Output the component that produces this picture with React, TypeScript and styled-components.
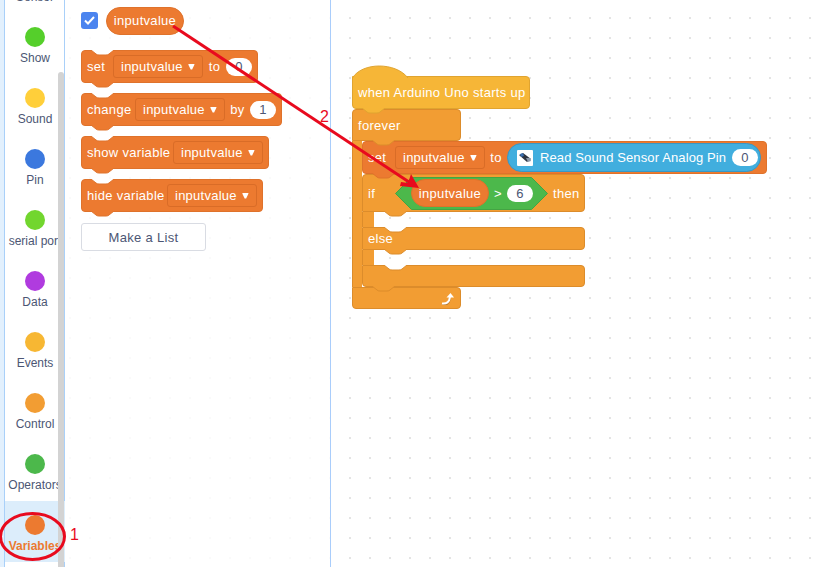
import React from "react";
import styled, { createGlobalStyle } from "styled-components";

const ORANGE = "#ec7a30";
const ORANGE_EDGE = "#df722b";
const CONTROL = "#f29d33";
const CONTROL_EDGE = "#dc8c2b";
const HAT = "#f6b637";
const HAT_EDGE = "#e0a430";
const RED = "#e80a1e";

const Global = createGlobalStyle`
  html, body { margin: 0; padding: 0; background: #fff; }
  body { font-family: "Liberation Sans", Arial, sans-serif; }
`;

const Page = styled.div`
  position: relative;
  display: flex;
  width: 820px;
  height: 567px;
  overflow: hidden;
  background: #fff;
`;

const Gutter = styled.div`
  flex: none;
  width: 4px;
  background: #e2f0fd;
  border-right: 1px solid #a9d0f9;
`;

const Sidebar = styled.nav`
  position: relative;
  flex: none;
  width: 60px;
  height: 567px;
  overflow: hidden;
  box-shadow: inset -1px 0 0 #a9d0f9;
`;

const CategoryList = styled.div`
  display: flex;
  flex-direction: column;
  margin-top: -47px;
`;

const Category = styled.div<{ $active?: boolean }>`
  display: flex;
  flex-direction: column;
  align-items: center;
  flex: none;
  width: 60px;
  height: 61px;
  box-sizing: border-box;
  margin-top: ${(p) => (p.$active ? -1 : 0)}px;
  padding-top: ${(p) => (p.$active ? 14 : 13)}px;
  background: ${(p) => (p.$active ? "#dcedfb" : "transparent")};
`;

const Dot = styled.span<{ $color: string }>`
  flex: none;
  width: 20px;
  height: 20px;
  border-radius: 50%;
  background: ${(p) => p.$color};
`;

const CategoryLabel = styled.span<{ $active?: boolean }>`
  margin-top: 4px;
  font-size: 12px;
  line-height: 15px;
  white-space: nowrap;
  font-weight: ${(p) => (p.$active ? 700 : 400)};
  color: ${(p) => (p.$active ? "#ec7a30" : "#4c5674")};
`;

const ScrollThumb = styled.div`
  position: absolute;
  top: 72px;
  right: 1px;
  bottom: 0;
  width: 6px;
  background: #d3d3d3;
  border-radius: 3px 3px 0 0;
`;

const Palette = styled.aside`
  flex: none;
  width: 249px;
  height: 560px;
  border-right: 1px solid #a9cdfb;
  padding: 7px 0 0 16px;
  display: flex;
  flex-direction: column;
  align-items: flex-start;
  gap: 10px;
  background-color: #fff;
  background-image: radial-gradient(circle at 10px 10px, #fafafa 1px, transparent 1.3px);
  background-size: 20px 20px;
  background-position: -5px 8px;
`;

const VarRow = styled.div`
  display: flex;
  align-items: center;
  gap: 8px;
  height: 27px;
  margin-bottom: 6px;
`;

const Checkbox = styled.span`
  display: flex;
  align-items: center;
  justify-content: center;
  width: 17px;
  height: 17px;
  border-radius: 3px;
  background: #4b84ef;
`;

const Block = styled.div<{ $fill: string; $edge: string; $width?: number; $height?: number }>`
  position: relative;
  display: flex;
  align-items: center;
  flex: none;
  box-sizing: border-box;
  width: ${(p) => (p.$width ? `${p.$width}px` : "fit-content")};
  height: ${(p) => p.$height ?? 33}px;
  padding: 0 5px;
  background: ${(p) => p.$fill};
  border: 1px solid ${(p) => p.$edge};
  border-radius: 4px;
  color: #fff;
  font-size: 13px;
  letter-spacing: 0.3px;
  white-space: nowrap;
`;

const HatBody = styled(Block)`
  border-top-left-radius: 0;
`;

const Head = styled(Block)`
  border-bottom-left-radius: 0;
`;

const Foot = styled(Block)`
  border-top-left-radius: 0;
  justify-content: flex-end;
`;

const Arm = styled(Block)`
  border-top-left-radius: 0;
  border-bottom-left-radius: 0;
`;

const Word = styled.span<{ $w: number; $center?: boolean }>`
  flex: none;
  width: ${(p) => p.$w}px;
  text-align: ${(p) => (p.$center ? "center" : "left")};
`;

const Dropdown = styled.span`
  display: flex;
  flex: none;
  align-items: center;
  gap: 5px;
  width: 90px;
  height: 23px;
  box-sizing: border-box;
  padding: 0 7px;
  border: 1px solid #d96c27;
  border-radius: 3px;
  letter-spacing: 0.25px;
`;

const Caret = styled.span`
  width: 8px;
  height: 6px;
  background: #fff;
  clip-path: polygon(0 0, 100% 0, 60% 100%, 40% 100%);
  border-radius: 1px;
`;

const Oval = styled.span<{ $height?: number }>`
  position: relative;
  display: flex;
  flex: none;
  align-items: center;
  justify-content: center;
  width: 26px;
  height: ${(p) => p.$height ?? 18}px;
  background: #fff;
  border-radius: 10px;
  color: #4c5674;
  font-size: 13px;
`;

const Pill = styled.span`
  position: relative;
  display: flex;
  align-items: center;
  justify-content: center;
  flex: none;
  width: 78px;
  height: 28px;
  box-sizing: border-box;
  background: ${ORANGE};
  border: 1px solid ${ORANGE_EDGE};
  border-radius: 14px;
  color: #fff;
  font-size: 13px;
  letter-spacing: 0.3px;
`;

const ListButton = styled.button`
  width: 125px;
  height: 28px;
  margin-top: 1px;
  background: #fff;
  border: 1px solid #d9dce3;
  border-radius: 3px;
  color: #4c5674;
  font-family: inherit;
  font-size: 13px;
  letter-spacing: 0.3px;
`;

const NotchMark = styled.svg<{ $left: number }>`
  position: absolute;
  left: ${(p) => p.$left}px;
  top: -1px;
  width: 23px;
  height: 6px;
  z-index: 2;
`;

const BumpMark = styled.svg<{ $left: number }>`
  position: absolute;
  left: ${(p) => p.$left}px;
  top: calc(100% - 0.5px);
  width: 23px;
  height: 6px;
  z-index: 3;
`;

const SHAPE = "M0,0 L5,4 Q6,5 8,5 H15 Q17,5 18,4 L23,0";

const Notch = ({ left, edge }: { left: number; edge: string }) => (
  <NotchMark $left={left} viewBox="0 0 23 6">
    <path d={SHAPE} fill="#fff" stroke={edge} strokeWidth={1} />
  </NotchMark>
);

const Bump = ({ left, fill, edge }: { left: number; fill: string; edge: string }) => (
  <BumpMark $left={left} viewBox="0 0 23 6">
    <path d={SHAPE} fill={fill} stroke={edge} strokeWidth={1} />
  </BumpMark>
);

const Canvas = styled.main`
  position: relative;
  flex: 1;
  height: 567px;
  background-color: #fff;
  background-image: radial-gradient(circle at 10px 10px, #e4e4e4 1px, transparent 1.3px);
  background-size: 20px 20px;
  background-position: 9px 8px;
`;

const Script = styled.div`
  position: absolute;
  left: 21px;
  top: 76px;
  display: flex;
  flex-direction: column;
  align-items: flex-start;
`;

const HatDome = styled.svg`
  position: absolute;
  left: -1px;
  top: -12px;
  width: 60px;
  height: 13px;
`;

const Middle = styled.div`
  display: flex;
  align-items: stretch;
`;

const Rail = styled.div<{ $width: number; $fill: string; $edge: string }>`
  flex: none;
  width: ${(p) => p.$width}px;
  box-sizing: border-box;
  background: ${(p) => p.$fill};
  border-left: 1px solid ${(p) => p.$edge};
`;

const Stack = styled.div`
  display: flex;
  flex-direction: column;
  align-items: flex-start;
`;

const Gap = styled.div`
  height: 15px;
  width: 100px;
`;

const Reporter = styled.div`
  display: flex;
  flex: none;
  align-items: center;
  width: 254px;
  height: 29px;
  box-sizing: border-box;
  padding: 0 2px 0 9px;
  background: #41aede;
  border: 1px solid #3897c4;
  border-radius: 15px;
  font-size: 13px;
`;

const SensorIcon = styled.svg`
  flex: none;
  width: 16px;
  height: 16px;
  margin-right: 7px;
`;

const ReporterLabel = styled.span`
  flex: 1;
  letter-spacing: 0.12px;
`;

const Hex = styled.div`
  position: relative;
  display: flex;
  flex: none;
  align-items: center;
  width: 153px;
  height: 33px;
  padding-left: 16px;
  box-sizing: border-box;
`;

const HexShape = styled.svg`
  position: absolute;
  left: 0;
  top: 0;
  width: 153px;
  height: 33px;
`;

const HexLabel = styled.span`
  position: relative;
  width: 18px;
  text-align: center;
`;

const ThenLabel = styled.span`
  margin-left: 5px;
`;

const Overlay = styled.svg`
  position: absolute;
  left: 0;
  top: 0;
  width: 820px;
  height: 567px;
  z-index: 10;
  pointer-events: none;
`;

const Mark = styled.span<{ $x: number; $y: number }>`
  position: absolute;
  left: ${(p) => p.$x}px;
  top: ${(p) => p.$y}px;
  z-index: 11;
  color: ${RED};
  font-size: 16px;
  line-height: 18px;
`;

const categories = [
  ["Sensor", "#2fb8d8"],
  ["Show", "#55cf2b"],
  ["Sound", "#ffcf3a"],
  ["Pin", "#3b78de"],
  ["serial port", "#72d62e"],
  ["Data", "#b03bdf"],
  ["Events", "#f7b733"],
  ["Control", "#f29d33"],
  ["Operators", "#4cb84b"],
  ["Variables", "#ec7a30"],
];

const VarPicker = () => (
  <Dropdown>
    inputvalue
    <Caret />
  </Dropdown>
);

const PaletteBlock = ({ children }: { children: React.ReactNode }) => (
  <Block $fill={ORANGE} $edge={ORANGE_EDGE}>
    <Notch left={9} edge={ORANGE_EDGE} />
    {children}
    <Bump left={9} fill={ORANGE} edge={ORANGE_EDGE} />
  </Block>
);

export default function App() {
  return (
    <Page>
      <Global />
      <Gutter />
      <Sidebar>
        <CategoryList>
          {categories.map(([name, color]) => (
            <Category key={name} $active={name === "Variables"}>
              <Dot $color={color} />
              <CategoryLabel $active={name === "Variables"}>{name}</CategoryLabel>
            </Category>
          ))}
        </CategoryList>
        <ScrollThumb />
      </Sidebar>
      <Palette>
        <VarRow>
          <Checkbox>
            <svg width="11" height="9" viewBox="0 0 11 9">
              <path d="M1 4.5 L4 7.5 L10 1" fill="none" stroke="#fff" strokeWidth="2" />
            </svg>
          </Checkbox>
          <Pill>inputvalue</Pill>
        </VarRow>
        <PaletteBlock>
          <Word $w={26}>set</Word>
          <VarPicker />
          <Word $w={23} $center>to</Word>
          <Oval>0</Oval>
        </PaletteBlock>
        <PaletteBlock>
          <Word $w={48}>change</Word>
          <VarPicker />
          <Word $w={25} $center>by</Word>
          <Oval>1</Oval>
        </PaletteBlock>
        <PaletteBlock>
          <Word $w={86}>show variable</Word>
          <VarPicker />
        </PaletteBlock>
        <PaletteBlock>
          <Word $w={80}>hide variable</Word>
          <VarPicker />
        </PaletteBlock>
        <ListButton>Make a List</ListButton>
      </Palette>
      <Canvas>
        <Script>
          <HatBody $fill={HAT} $edge={HAT_EDGE} $width={178}>
            <HatDome viewBox="0 0 60 13">
              <path d="M0.5 13 C10 -3 44 -3 56 13 Z" fill={HAT} />
              <path d="M0.5 13 C10 -3 44 -3 56 13" fill="none" stroke={HAT_EDGE} />
            </HatDome>
            when Arduino Uno starts up
            <Bump left={9} fill={HAT} edge={HAT_EDGE} />
          </HatBody>
          <Head $fill={CONTROL} $edge={CONTROL_EDGE} $width={109} $height={32}>
            forever
            <Bump left={19} fill={CONTROL} edge={CONTROL_EDGE} />
          </Head>
          <Middle>
            <Rail $width={10} $fill={CONTROL} $edge={CONTROL_EDGE} />
            <Stack>
              <Block $fill={ORANGE} $edge={ORANGE_EDGE} $width={405}>
                <Word $w={27}>set</Word>
                <VarPicker />
                <Word $w={22} $center>to</Word>
                <Reporter>
                  <SensorIcon viewBox="0 0 16 16">
                    <rect width="16" height="16" rx="1" fill="#fff" />
                    <path d="M2 5 L6 3 L14 9 L10 12 Z" fill="#2b3340" />
                    <path d="M9 8 L13 8 L14 11 L11 12 Z" fill="#8a97a8" />
                    <path d="M3 4 L6 3 L7 6 L4 7 Z" fill="#3a6fb0" />
                  </SensorIcon>
                  <ReporterLabel>Read Sound Sensor Analog Pin</ReporterLabel>
                  <Oval $height={17}>0</Oval>
                </Reporter>
                <Bump left={9} fill={ORANGE} edge={ORANGE_EDGE} />
              </Block>
              <Head $fill={CONTROL} $edge={CONTROL_EDGE} $width={223} $height={38}>
                <Word $w={27}>if</Word>
                <Hex>
                  <HexShape viewBox="0 0 153 33">
                    <path d="M16.5 .5 H136.5 L152.5 16.5 L136.5 32.5 H16.5 L.5 16.5 Z" fill="#4cb84b" stroke="#43a443" />
                  </HexShape>
                  <Pill>inputvalue</Pill>
                  <HexLabel>&gt;</HexLabel>
                  <Oval $height={17}>6</Oval>
                </Hex>
                <ThenLabel>then</ThenLabel>
                <Bump left={21} fill={CONTROL} edge={CONTROL_EDGE} />
              </Head>
              <Middle>
                <Rail $width={12} $fill={CONTROL} $edge={CONTROL_EDGE} />
                <Gap />
              </Middle>
              <Arm $fill={CONTROL} $edge={CONTROL_EDGE} $width={223} $height={23}>
                <Notch left={21} edge={CONTROL_EDGE} />
                else
                <Bump left={21} fill={CONTROL} edge={CONTROL_EDGE} />
              </Arm>
              <Middle>
                <Rail $width={12} $fill={CONTROL} $edge={CONTROL_EDGE} />
                <Gap />
              </Middle>
              <Foot $fill={CONTROL} $edge={CONTROL_EDGE} $width={223} $height={22}>
                <Notch left={21} edge={CONTROL_EDGE} />
                <Bump left={9} fill={CONTROL} edge={CONTROL_EDGE} />
              </Foot>
            </Stack>
          </Middle>
          <Foot $fill={CONTROL} $edge={CONTROL_EDGE} $width={109} $height={22}>
            <svg width="14" height="13" viewBox="0 0 14 13">
              <path d="M1 11.5 Q8 12.5 9 5" fill="none" stroke="#b9772a" strokeWidth="2" transform="translate(0 1)" />
              <path d="M1 11.5 Q8 12.5 9 5" fill="none" stroke="#fff" strokeWidth="2" />
              <path d="M5.5 5.5 L9.5 1 L13 5.5 Z" fill="#fff" />
            </svg>
          </Foot>
        </Script>
      </Canvas>
      <Overlay viewBox="0 0 820 567">
        <ellipse cx="32.5" cy="536.5" rx="32" ry="23" fill="none" stroke={RED} strokeWidth="3" />
        <path d="M173 26 L412 184" stroke={RED} strokeWidth="3" />
        <path d="M419 188 L400 186 L401 182 L408 183 L411 174 Z" fill={RED} />
      </Overlay>
      <Mark $x={320} $y={108}>2</Mark>
      <Mark $x={70} $y={526}>1</Mark>
    </Page>
  );
}
